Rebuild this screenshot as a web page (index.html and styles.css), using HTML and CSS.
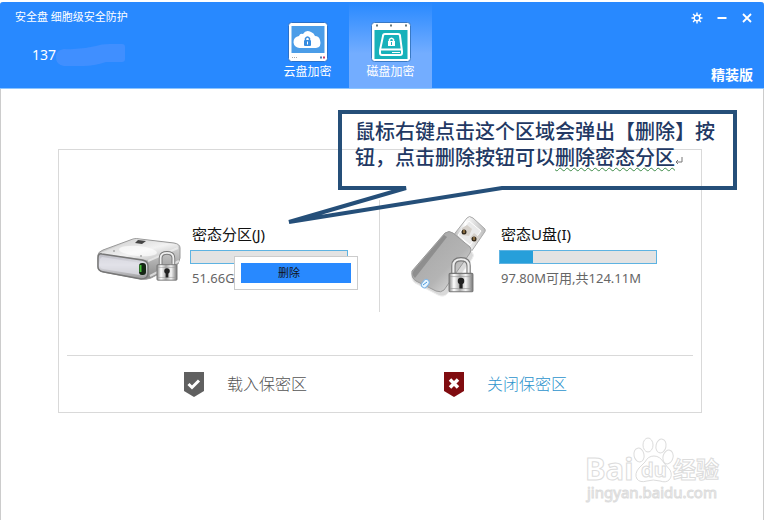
FILE: index.html
```html
<!DOCTYPE html>
<html lang="zh-CN">
<head>
<meta charset="utf-8">
<title>安全盘</title>
<link rel="stylesheet" href="styles.css">
</head>
<body>
<div class="window">
  <header class="header">
    <div class="brand">
      <h1 class="title">安全盘 细胞级安全防护</h1>
      <div class="account">137<svg class="smudge" width="69" height="22" viewBox="0 0 69 22" aria-hidden="true"><path d="M8 5Q24 6 40 2Q45 0 54 0H66Q69 0 69 3V15Q69 18 66 18H50Q38 22 27 22H8Q0 21 0 13Q0 6 8 5Z" fill="#408fff"/></svg></div>
    </div>
    <nav class="tabs">
      <button class="tab" type="button">
        <svg width="40" height="40" viewBox="0 0 40 40" aria-hidden="true">
          <rect x=".5" y=".5" width="39" height="39" rx="3" fill="#fff" stroke="#2a70c9"/>
          <rect x="3.5" y="4" width="33" height="27" fill="#4b9de8"/>
          <path d="M12 26A6 6 0 0 1 11 14Q12 11 15 12Q18 7 23 10Q26 11 27 14Q31 14 32 18Q34 25 28 26Z" fill="#fff"/>
          <rect x="16" y="18" width="7" height="6" rx="1" fill="#388de0"/><path d="M17.5 18V16.5Q19.5 13.5 21.5 16.5V18" fill="none" stroke="#388de0" stroke-width="1.5"/><path d="M19.5 19.5v3" stroke="#fff"/>
          <path d="M4 35.5h5" stroke="#aaa" stroke-dasharray="1 1"/><path d="M32 35.5h2" stroke="#527bad" stroke-width="2"/><path d="M35 35.5h2" stroke="#cc3b68" stroke-width="2"/>
        </svg>
        <span>云盘加密</span>
      </button>
      <button class="tab active" type="button">
        <svg width="40" height="40" viewBox="0 0 40 40" aria-hidden="true">
          <rect x=".5" y=".5" width="39" height="39" rx="3" fill="#fff" stroke="#3979c4"/>
          <rect x="3.5" y="8" width="33" height="29" fill="#17b1ba"/>
          <path d="M5 3.5h2M19 3.5h2M34 3.5h2" stroke="#65777b" stroke-width="2"/>
          <path d="M14 12H27Q29 12 29 14L31 29V31Q31 33 29 33H11Q9 33 9 31V28L12 14Q12 12 14 12ZM9 27.5H31" fill="none" stroke="#fff" stroke-width="2"/>
          <path d="M21 30.5h8" stroke="#fff"/><rect x="17" y="19" width="7" height="5" fill="#fff"/><path d="M18.5 19V17.5Q20.5 15 22.5 17.5V19" fill="none" stroke="#fff" stroke-width="1.5"/><path d="M20.5 20v3" stroke="#17b1ba"/>
        </svg>
        <span>磁盘加密</span>
      </button>
    </nav>
    <div class="side">
      <div class="controls">
        <button type="button" aria-label="设置"><svg width="12" height="12" viewBox="0 0 12 12"><g fill="none" stroke="#fff"><circle cx="6" cy="6" r="2.8" stroke-width="1.4"/><path d="M6 .5V3M6 9v2.5M.5 6H3M9 6h2.5M2.1 2.1 3.9 3.9M8.1 8.1l1.8 1.8M2.1 9.9l1.8-1.8M8.1 3.9l1.8-1.8" stroke-width="1.4"/></g></svg></button>
        <button type="button" aria-label="最小化"><svg width="12" height="12" viewBox="0 0 12 12"><path d="M1.5 6h9" stroke="#fff" stroke-width="2"/></svg></button>
        <button type="button" aria-label="关闭"><svg width="12" height="12" viewBox="0 0 12 12"><path d="M2 2l8 8M10 2l-8 8" stroke="#fff" stroke-width="1.8"/></svg></button>
      </div>
      <strong class="edition">精装版</strong>
    </div>
  </header>

  <main class="main">
    <section class="panel">
      <div class="drives">
        <article class="drive disk-drive">
          <svg class="disk" width="84" height="60" viewBox="0 0 84 60" aria-hidden="true">
            <defs>
              <linearGradient id="top" x1="0" y1="0" x2="1" y2="1"><stop stop-color="#c9c9c9"/><stop offset=".55" stop-color="#f2f2f2"/><stop offset="1" stop-color="#b5b5b5"/></linearGradient>
              <linearGradient id="front" x1="0" y1="0" x2="0" y2="1"><stop stop-color="#b9b9c0"/><stop offset=".45" stop-color="#e2e2ea"/><stop offset="1" stop-color="#989898"/></linearGradient>
              <linearGradient id="edge" x1="0" y1="0" x2="0" y2="1"><stop stop-color="#e4e4e4"/><stop offset="1" stop-color="#888"/></linearGradient>
              <linearGradient id="lock" x1="0" y1="0" x2="1" y2="0"><stop stop-color="#888"/><stop offset=".2" stop-color="#fff"/><stop offset=".45" stop-color="#aaa"/><stop offset=".7" stop-color="#f5f5f5"/><stop offset="1" stop-color="#777"/></linearGradient>
              <symbol id="padlock" viewBox="0 0 24 34"><path d="M5 16V8Q5 2 12 2Q19 2 19 8V16" fill="none" stroke="#777" stroke-width="4"/><path d="M5 16V8Q5 2 12 2Q19 2 19 8V16" fill="none" stroke="#eee" stroke-width="2"/><rect x="1" y="15" width="22" height="17" rx="1" fill="url(#lock)" stroke="#777"/><path d="M2 18h20M2 29h20" stroke="#999" stroke-width=".6"/><circle cx="12" cy="22" r="3" fill="#222"/><path d="M12 22v7" stroke="#222" stroke-width="3"/></symbol>
            </defs>
            <path d="M1 17Q1 14 6 12L36 1Q39 0 43 1L77 5Q83 6 83 10V20L81 26L54 40Q49 42 44 41L6 34Q1 33 1 29Z" fill="url(#edge)" stroke="#999"/>
            <path d="M3 15L36 2Q40 1 44 2L78 6Q83 7 80 10L53 21Q50 23 45 21L5 16Z" fill="url(#top)"/>
            <ellipse cx="41" cy="13" rx="19" ry="5" fill="#fff" opacity=".65" transform="rotate(5 41 13)"/>
            <path d="M51 23L81 10M53 38L82 23" stroke="#f5f5f5" stroke-width="2" opacity=".7"/>
            <path d="M5 16L45 22Q51 23 51 28V35Q51 41 44 41L7 34Q1 33 1 29V20Q1 15 5 16Z" fill="url(#front)" stroke="#777" stroke-width="1.5"/>
            <path d="M5 19L43 25V37L6 31Q3 30 3 27V21Z" fill="#e1e1e8" opacity=".7"/>
            <path d="M41 2l8 1-4 3-7-1Z" fill="#444"/><circle cx="17" cy="13" r="1" fill="#aaa"/><circle cx="44" cy="18" r="1" fill="#aaa"/>
            <rect x="42" y="25" width="7" height="12" rx="3" fill="#152615"/><path d="M43.500 27v7" stroke="#43bf37" stroke-width="2"/>
            <use href="#padlock" x="59" y="13" width="22" height="31"/>
          </svg>
          <div class="info">
            <h2 id="disk-name">密态分区(J)</h2>
            <div class="bar" role="img" aria-labelledby="disk-name"></div>
            <p>51.66G</p>
            <div class="menu"><button type="button">删除</button></div>
          </div>
        </article>
        <article class="drive usb-drive">
          <svg class="usb" width="80" height="84" viewBox="0 0 80 84" aria-hidden="true">
            <defs><linearGradient id="stick" x1="0" y1="0" x2="1" y2="1"><stop stop-color="#555"/><stop offset=".25" stop-color="#aaa"/><stop offset=".6" stop-color="#b4b4b4"/><stop offset="1" stop-color="#eee"/></linearGradient><linearGradient id="plug"><stop stop-color="#aaa"/><stop offset=".4" stop-color="#fff"/><stop offset="1" stop-color="#bbb"/></linearGradient></defs>
            <path d="M57 4Q59 1 63 4L75 15Q76 17 74 19L61 38L42 23Z" fill="url(#plug)" stroke="#aaa"/>
            <path d="M59 7L71 17L60 31L48 21Z" fill="#e9e9e9" stroke="#fff"/>
            <path d="M52 14l5-3 5 4-3 7-7-1zM60 24l4-5 5 4-3 6z" fill="#d5d0ca"/><circle cx="54" cy="18" r="2.5" fill="#362c1e"/><circle cx="64" cy="25" r="2.5" fill="#362c1e"/><path d="M54 16v3M64 23v3" stroke="#d7a85e"/>
            <path d="M34 21Q37 18 43 21L62 38Q65 41 62 45L38 79Q34 84 28 81L5 69Q1 66 2 60Z" fill="#d9d9d9" stroke="#eee"/>
            <path d="M35 19Q39 16 43 19L60 33Q62 35 60 39L34 76Q31 79 26 77L6 67Q1 64 2 57Z" fill="url(#stick)" stroke="#999"/>
            <path d="M34 21L4 56Q1 61 5 64L37 23Z" fill="#555" opacity=".35"/>
            <rect x="12" y="65" width="6" height="9" rx="3" transform="rotate(38 15 70)" fill="#e9f6ff" stroke="#80b6e5"/><path d="M13 71l4-3" stroke="#4296dd"/>
            <use href="#padlock" x="38" y="43" width="26" height="37"/>
          </svg>
          <div class="info">
            <h2 id="usb-name">密态U盘(I)</h2>
            <div class="bar" role="img" aria-labelledby="usb-name"><div class="fill" style="width:21%"></div></div>
            <p>97.80M可用,共124.11M</p>
          </div>
        </article>
      </div>
      <footer class="actions">
        <button class="action load" type="button"><svg width="20" height="25" viewBox="0 0 20 25" aria-hidden="true"><path d="M0 0H20V19L10 25L0 19Z" fill="#606060"/><path d="M4.5 12L8 15.5L15 8.5" fill="none" stroke="#fff" stroke-width="3"/></svg><span>载入保密区</span></button>
        <button class="action close" type="button"><svg width="20" height="25" viewBox="0 0 20 25" aria-hidden="true"><path d="M0 0H20V19L10 25L0 19Z" fill="#800c10"/><path d="M6 7.500l8 8M14 7.500l-8 8" stroke="#fff" stroke-width="3.5"/></svg><span>关闭保密区</span></button>
      </footer>
      <aside class="callout">
        <svg width="452" height="118" viewBox="0 0 452 118" aria-hidden="true"><path d="M121 79H55V3H450V79H217L4 113L121 79Z" fill="none" stroke="#254f79" stroke-width="4"/></svg>
        <p>鼠标右键点击这个区域会弹出【删除】按<br>钮，点击删除按钮可以<span class="wavy">删除密态分区</span><svg class="return" width="8" height="8" viewBox="0 0 8 8" aria-hidden="true"><path d="M7 0V5H1M3 3L1 5L3 7" fill="none" stroke="#777"/></svg></p>
      </aside>
    </section>
  </main>

  <svg class="watermark" width="140" height="70" viewBox="0 0 140 70" role="img" aria-label="Baidu 经验 jingyan.baidu.com">
    <g fill="#fff" stroke="#dcdcdc" stroke-width="1">
      <ellipse cx="54" cy="20" rx="5" ry="7" transform="rotate(-12 54 20)"/><ellipse cx="63" cy="10" rx="5" ry="7"/><ellipse cx="76" cy="11" rx="5" ry="7" transform="rotate(12 76 11)"/><ellipse cx="83" cy="22" rx="5" ry="7" transform="rotate(15 83 22)"/>
      <path d="M69 21Q75 21 79 28L85 35Q88 41 84 45Q81 48 75 46Q68 44 62 46Q55 48 52 44Q49 39 54 33L60 27Q63 21 69 21Z"/>
      <g class="mark"><text x="0" y="45" font-size="31">Bai</text><text x="56" y="42" font-size="20">du</text><text x="88" y="43" font-size="23">经验</text></g>
      <text class="url" x="2" y="63" font-size="15">jingyan.baidu.com</text>
    </g>
  </svg>
</div>
</body>
</html>
```
FILE: styles.css
```css
* { box-sizing: border-box; }
body {
  margin: 0;
  background: #fff;
  font-family: "Noto Sans", "Noto Sans CJK SC", sans-serif;
  color: #222;
}
h1, h2, p { margin: 0; font-weight: 400; }
button {
  margin: 0;
  padding: 0;
  border: 0;
  background: none;
  color: inherit;
  font: inherit;
}
svg { display: block; flex: none; }
.window {
  position: relative;
  min-height: calc(100vh - 2px);
  margin: 2px 1px 0 0;
  border: solid #ccc;
  border-width: 0 1px;
  border-radius: 3px 3px 0 0;
}
.header {
  display: flex;
  height: 87px;
  margin: 0 -1px;
  border-bottom: 1px solid #8cc5ff;
  border-radius: 3px 3px 0 0;
  background: #2889ff;
  color: #fff;
}
.brand { width: 266px; padding: 7px 0 0 15px; }
.title { font-size: 11px; line-height: 16px; }
.account {
  display: flex;
  align-items: center;
  padding: 18px 0 0 17px;
  font-size: 14px;
  line-height: 24px;
}
.tabs { display: flex; }
.tab {
  display: flex;
  flex-direction: column;
  align-items: center;
  width: 83px;
  padding-top: 20px;
  font-size: 12px;
  line-height: 20px;
}
.tab.active { background: linear-gradient(#2889ff, #73adff 60%); }
.side {
  display: flex;
  flex: 1;
  flex-direction: column;
  align-items: flex-end;
  justify-content: space-between;
  padding: 10px 11px 3px 0;
}
.controls { display: flex; gap: 13px; }
.edition { font-size: 14px; line-height: 20px; }
.main { padding: 60px 61px 0 57px; }
.panel {
  position: relative;
  border: 1px solid #d9d9d9;
}
.drives {
  display: grid;
  grid-template-columns: 1fr 1fr;
  margin: 50px 8px 0;
  padding-bottom: 43px;
  border-bottom: 1px solid #d9d9d9;
}
.drive {
  display: flex;
  height: 112px;
  padding-left: 30px;
}
.disk-drive { gap: 9px; border-right: 1px solid #d9d9d9; }
.usb-drive { gap: 9px; }
.disk { margin-top: 38px; }
.usb { margin-top: 14px; }
.info { position: relative; padding-top: 22px; }
.info h2 {
  padding-left: 2px;
  color: #111;
  font-size: 15px;
  line-height: 24px;
}
.bar {
  width: 158px;
  height: 14px;
  margin: 4px 0;
  border: 1px solid #5eb3e2;
  background: #e3e3e3;
}
.fill { height: 100%; background: #279fda; }
.info p {
  padding-left: 2px;
  color: #666;
  font-size: 13px;
  line-height: 20px;
}
.menu {
  position: absolute;
  top: 56px;
  left: 44px;
  width: 124px;
  padding: 6px;
  border: 1px solid #ccc;
  background: #fff;
}
.menu button {
  display: block;
  width: 110px;
  height: 20px;
  padding-right: 14px;
  background: #2889ff;
  color: #111;
  font-size: 11px;
  line-height: 18px;
}
.actions {
  display: grid;
  grid-template-columns: 1fr 1fr;
  height: 56px;
}
.action {
  display: flex;
  align-items: center;
  gap: 23px;
  font-size: 16px;
  line-height: 24px;
  font-weight: 300;
}
.load { padding-left: 125px; color: #555; }
.close { padding-left: 64px; color: #2c94cd; }
.callout {
  position: absolute;
  top: -41px;
  left: 226px;
}
.callout p {
  position: absolute;
  top: 10px;
  left: 70px;
  color: #223863;
  font-family: "Liberation Serif", "Noto Sans CJK SC", serif;
  font-size: 20px;
  line-height: 26px;
  font-weight: 500;
  white-space: nowrap;
}
.wavy { text-decoration: underline wavy #3c8a48 1px; text-underline-offset: 2px; }
.return { display: inline-block; }
.watermark { position: absolute; right: 38px; bottom: 15px; }
.mark { font-family: "Noto Sans", "Noto Sans CJK SC", sans-serif; font-weight: 700; }
.url { font-family: "Noto Sans", sans-serif; }
```
